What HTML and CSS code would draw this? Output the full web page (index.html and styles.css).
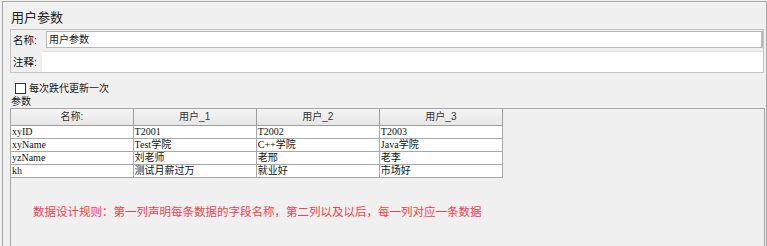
FILE: index.html
```html
<!DOCTYPE html>
<html lang="zh-CN">
<head>
<meta charset="utf-8">
<title>用户参数</title>
<link rel="stylesheet" href="styles.css">
</head>
<body>
<div class="frame">
  <div class="title">用户参数</div>
  <div class="info">
    <div class="row row-name">
      <span class="label label-name">名称:</span>
      <div class="field field-name">用户参数</div>
    </div>
    <div class="row row-note">
      <span class="label label-note">注释:</span>
      <div class="field field-note"></div>
    </div>
  </div>
  <div class="check-row">
    <span class="checkbox"></span>
    <span class="check-text">每次跌代更新一次</span>
  </div>
  <div class="section-label">参数</div>
  <div class="params">
    <table class="grid">
      <colgroup>
        <col class="c1"><col class="c2"><col class="c3"><col class="c4">
      </colgroup>
      <thead>
        <tr class="head-row"><th>名称:</th><th>用户_1</th><th>用户_2</th><th>用户_3</th></tr>
      </thead>
      <tbody>
        <tr><td>xyID</td><td>T2001</td><td>T2002</td><td>T2003</td></tr>
        <tr><td>xyName</td><td>Test学院</td><td>C++学院</td><td>Java学院</td></tr>
        <tr><td>yzName</td><td>刘老师</td><td>老邢</td><td>老李</td></tr>
        <tr><td>kh</td><td>测试月薪过万</td><td>就业好</td><td>市场好</td></tr>
      </tbody>
    </table>
    <div class="rule">数据设计规则：第一列声明每条数据的字段名称，第二列以及以后，每一列对应一条数据</div>
  </div>
</div>
</body>
</html>
```
FILE: styles.css
```css
html, body {
  margin: 0;
  padding: 0;
  background: #f0f0f0;
  height: 100%;
  overflow: hidden;
}
body {
  font-family: "Liberation Sans", "Noto Sans CJK SC", sans-serif;
  color: #1a1a1a;
}
.frame {
  box-sizing: border-box;
  margin: 1px 0 0 2px;
  width: 765px;
  height: 245px;
  border: 1px solid #a8a8a8;
  border-bottom: none;
  display: flex;
  flex-direction: column;
}
.title {
  box-sizing: border-box;
  height: 27px;
  padding: 6px 0 0 8px;
  font-size: 13px;
  line-height: 20px;
  color: #222;
}
.info {
  box-sizing: border-box;
  margin: 0 2px 0 7px;
  height: 44px;
  border: 1px solid #c4c4c4;
  display: flex;
  flex-direction: column;
}
.row {
  display: flex;
}
.row-name {
  height: 19px;
}
.row-note {
  margin-top: 2px;
  flex: 1;
}
.label {
  box-sizing: border-box;
  font-size: 10.5px;
  line-height: 18px;
  padding-left: 2px;
  color: #111;
}
.label-name {
  width: 35px;
  padding-top: 1px;
}
.label-note {
  width: 31px;
  padding-top: 2px;
}
.field {
  flex: 1;
  background: #fff;
  box-sizing: border-box;
}
.field-name {
  margin-top: 1px;
  height: 17px;
  border: 1px solid #b8b8b8;
  border-right-width: 2px;
  font-size: 10px;
  line-height: 15px;
  padding-left: 2px;
}
.field-note {
  border-top: 1px solid #e2e2e2;
}
.check-row {
  box-sizing: border-box;
  height: 22px;
  padding: 10px 0 0 12px;
  display: flex;
  align-items: flex-start;
}
.checkbox {
  box-sizing: border-box;
  width: 11px;
  height: 11px;
  border: 1px solid #333;
  background: #fff;
}
.check-text {
  margin-left: 3px;
  font-size: 10px;
  line-height: 11px;
}
.section-label {
  box-sizing: border-box;
  height: 13px;
  padding-left: 8px;
  padding-top: 1px;
  font-size: 10px;
  line-height: 12px;
}
.params {
  box-sizing: border-box;
  margin: 0 1px 0 7px;
  flex: 1;
  border: 1px solid #a6a6a6;
  border-bottom: none;
}
.grid {
  border-collapse: collapse;
  table-layout: fixed;
  width: 492px;
  font-family: "Liberation Serif", "Noto Sans CJK SC", serif;
  font-size: 10px;
}
.c1 { width: 122px; }
.c2 { width: 123px; }
.c3 { width: 123px; }
.c4 { width: 123px; }
.grid tr {
  height: 13px;
}
.grid tr.head-row {
  height: 16px;
}
.grid th {
  padding: 0;
  font-family: "Liberation Sans", "Noto Sans CJK SC", sans-serif;
  font-weight: normal;
  font-size: 10px;
  line-height: 12px;
  color: #333;
  background: linear-gradient(#f4f4f4, #e6e6e6);
  border: 1px solid #9e9e9e;
  border-top: none;
  border-left: none;
  text-align: center;
}
.grid td {
  padding: 0 0 0 1px;
  line-height: 11px;
  background: #fff;
  border: 1px solid #a8a8a8;
  border-left: none;
  white-space: nowrap;
  overflow: hidden;
  color: #111;
}
.rule {
  margin-top: 27px;
  padding-left: 22px;
  font-size: 11.5px;
  line-height: 14px;
  color: #f2404c;
}
```
